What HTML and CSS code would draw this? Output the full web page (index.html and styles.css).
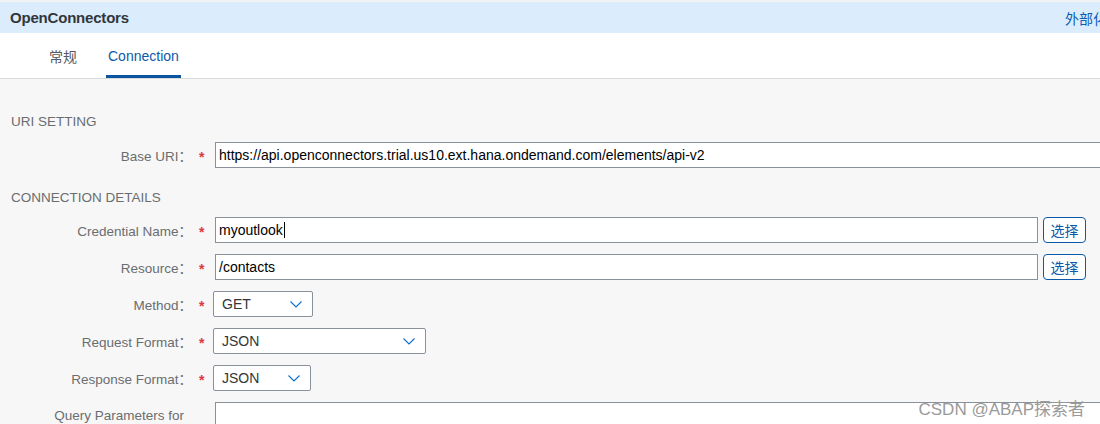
FILE: index.html
```html
<!DOCTYPE html>
<html lang="zh">
<head>
<meta charset="utf-8">
<title>OpenConnectors</title>
<link rel="stylesheet" href="styles.css">
</head>
<body>
<div class="page">
  <header class="header">
    <div class="title">OpenConnectors</div>
    <div class="externalize">外部化</div>
  </header>
  <nav class="tabs">
    <div class="tab">常规</div>
    <div class="tab active">Connection</div>
  </nav>
  <main class="content">
    <div class="section-title">URI SETTING</div>
    <div class="row">
      <div class="label">Base URI：</div>
      <div class="star">*</div>
      <div class="input wide"><span>https://api.openconnectors.trial.us10.ext.hana.ondemand.com/elements/api-v2</span></div>
    </div>
    <div class="section-title second">CONNECTION DETAILS</div>
    <div class="row">
      <div class="label">Credential Name：</div>
      <div class="star">*</div>
      <div class="input medium"><span>myoutlook</span><span class="caret"></span></div>
      <button class="btn">选择</button>
    </div>
    <div class="row">
      <div class="label">Resource：</div>
      <div class="star">*</div>
      <div class="input medium"><span>/contacts</span></div>
      <button class="btn">选择</button>
    </div>
    <div class="row">
      <div class="label">Method：</div>
      <div class="star">*</div>
      <div class="select s-method"><span>GET</span><svg class="chev" width="12" height="7" viewBox="0 0 12 7"><polyline points="0.5,0.5 6,6 11.5,0.5" fill="none" stroke="#0a6ed1" stroke-width="1.1"/></svg></div>
    </div>
    <div class="row">
      <div class="label">Request Format：</div>
      <div class="star">*</div>
      <div class="select s-request"><span>JSON</span><svg class="chev" width="12" height="7" viewBox="0 0 12 7"><polyline points="0.5,0.5 6,6 11.5,0.5" fill="none" stroke="#0a6ed1" stroke-width="1.1"/></svg></div>
    </div>
    <div class="row">
      <div class="label">Response Format：</div>
      <div class="star">*</div>
      <div class="select s-response"><span>JSON</span><svg class="chev" width="12" height="7" viewBox="0 0 12 7"><polyline points="0.5,0.5 6,6 11.5,0.5" fill="none" stroke="#0a6ed1" stroke-width="1.1"/></svg></div>
    </div>
    <div class="row">
      <div class="label plain">Query Parameters for</div>
      <div class="star"></div>
      <div class="input wide"></div>
    </div>
  </main>
  <div class="watermark">CSDN @ABAP探索者</div>
</div>
</body>
</html>
```

FILE: styles.css
```css
html, body {
  margin: 0;
  padding: 0;
}
body {
  width: 1100px;
  height: 424px;
  overflow: hidden;
  background: #f7f7f7;
  font-family: "Liberation Sans", Arial, "Noto Sans CJK SC", sans-serif;
}
.page {
  position: relative;
  width: 1100px;
  height: 424px;
  overflow: hidden;
}
.header {
  height: 31px;
  border-top: 2px solid #f0f2f4;
  background: #dbecfc;
  display: flex;
  align-items: center;
  justify-content: space-between;
  padding: 0 0 0 10px;
}
.title {
  font-size: 15px;
  font-weight: bold;
  color: #32363a;
  letter-spacing: -0.2px;
}
.externalize {
  font-size: 14px;
  color: #0a5fb4;
  margin-right: -30px;
  width: 65px;
  white-space: nowrap;
}
.tabs {
  height: 45px;
  background: #ffffff;
  border-bottom: 1px solid #d9d9d9;
  display: flex;
  padding-left: 49px;
  gap: 29px;
}
.tab {
  font-size: 14px;
  color: #555a5f;
  display: flex;
  align-items: center;
  height: 45px;
  box-sizing: border-box;
  padding-top: 1px;
}
.tab.active {
  color: #0b5aa8;
  border-bottom: 3px solid #0b54a0;
  padding: 4px 2px 0 2px;
}
.content {
  padding-top: 35px;
}
.section-title {
  font-size: 13.5px;
  line-height: 16px;
  color: #6a6d70;
  padding-left: 11px;
  margin-bottom: 12px;
}
.section-title.second {
  margin-top: 22px;
  margin-bottom: 11px;
}
.row {
  display: flex;
  align-items: center;
  height: 26px;
  margin-bottom: 11px;
}
.label {
  flex: none;
  width: 192px;
  box-sizing: border-box;
  text-align: right;
  font-size: 13.5px;
  color: #6a6d70;
  white-space: nowrap;
}
.label.plain {
  padding-right: 8px;
}
.star {
  flex: none;
  width: 21px;
  box-sizing: border-box;
  padding-left: 7px;
  color: #e0363a;
  font-size: 14px;
  font-weight: bold;
  line-height: 14px;
  padding-top: 3px;
}
.input {
  flex: none;
  height: 26px;
  box-sizing: border-box;
  margin-left: 2px;
  background: #ffffff;
  border: 1px solid #89919a;
  font-size: 14px;
  color: #000;
  display: flex;
  align-items: center;
  padding-left: 3px;
  white-space: nowrap;
  overflow: hidden;
}
.input.wide {
  width: 1000px;
}
.input.medium {
  width: 823px;
}
.caret {
  display: inline-block;
  width: 1px;
  height: 16px;
  background: #000;
  margin-left: 1px;
}
.btn {
  flex: none;
  margin-left: 5px;
  width: 43px;
  height: 26px;
  box-sizing: border-box;
  background: #ffffff;
  border: 1px solid #0b5aa8;
  border-radius: 4px;
  color: #0b5aa8;
  font-size: 14px;
  font-family: "Noto Sans CJK SC", sans-serif;
  padding: 0;
  line-height: 22px;
}
.select {
  flex: none;
  height: 26px;
  box-sizing: border-box;
  background: #ffffff;
  border: 1px solid #89919a;
  border-radius: 2px;
  display: flex;
  align-items: center;
  justify-content: space-between;
  padding: 0 10px 0 8px;
  font-size: 14px;
  color: #32363a;
}
.s-method { width: 100px; }
.s-request { width: 213px; }
.s-response { width: 98px; }
.chev {
  display: block;
}
.watermark {
  position: absolute;
  right: 15px;
  top: 395px;
  font-size: 17px;
  color: #9a9a9a;
  white-space: nowrap;
}
```
